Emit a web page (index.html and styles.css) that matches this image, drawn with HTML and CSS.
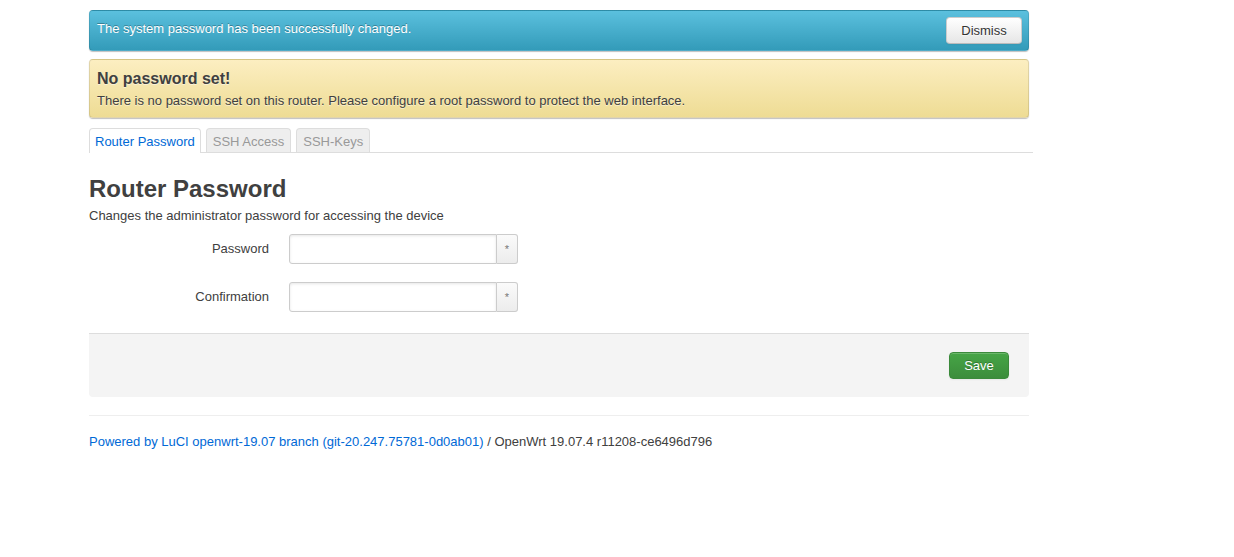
FILE: index.html
```html
<!DOCTYPE html>
<html>
<head>
<meta charset="utf-8">
<link rel="stylesheet" href="styles.css">
</head>
<body>
<div class="container">
  <div class="alert info">
    <span class="alert-text">The system password has been successfully changed.</span>
    <button class="btn">Dismiss</button>
  </div>
  <div class="alert warning">
    <h4>No password set!</h4>
    <p>There is no password set on this router. Please configure a root password to protect the web interface.</p>
  </div>
  <ul class="tabs">
    <li class="tab active">Router Password</li>
    <li class="tab">SSH Access</li>
    <li class="tab">SSH-Keys</li>
  </ul>
  <h2 class="title">Router Password</h2>
  <div class="desc">Changes the administrator password for accessing the device</div>
  <div class="form">
    <div class="row">
      <label class="label">Password</label>
      <div class="field"><input class="input" type="password"><span class="addon">*</span></div>
    </div>
    <div class="row">
      <label class="label">Confirmation</label>
      <div class="field"><input class="input" type="password"><span class="addon">*</span></div>
    </div>
  </div>
  <div class="actions">
    <button class="btn save">Save</button>
  </div>
  <hr class="rule">
  <footer class="footer"><a href="#">Powered by LuCI openwrt-19.07 branch (git-20.247.75781-0d0ab01)</a> / OpenWrt 19.07.4 r11208-ce6496d796</footer>
</div>
</body>
</html>
```
FILE: styles.css
```css
* { box-sizing: border-box; }
html, body { margin: 0; padding: 0; background: #fff; }
body {
  font-family: "Liberation Sans", Arial, sans-serif;
  font-size: 13px;
  color: #404040;
}
.container {
  width: 940px;
  margin-left: 89px;
  padding-top: 10px;
}
.alert {
  border-radius: 4px;
  border: 1px solid rgba(0,0,0,0.1);
  box-shadow: 0 1px 1px rgba(0,0,0,0.25);
}
.alert.info {
  height: 41px;
  background: linear-gradient(#5bc0de, #339bb9);
  display: flex;
  align-items: center;
  justify-content: space-between;
  padding: 0 6px 0 7px;
  color: #fff;
  text-shadow: 0 -1px 0 rgba(0,0,0,0.3);
}
.alert-text { font-size: 13px; margin-top: -5px; }
.btn {
  font-family: "Liberation Sans", Arial, sans-serif;
  font-size: 13px;
  color: #333;
  background: linear-gradient(#fff, #e6e6e6);
  border: 1px solid #ccc;
  border-bottom-color: #bbb;
  border-radius: 4px;
  box-shadow: inset 0 1px 0 rgba(255,255,255,0.2), 0 1px 2px rgba(0,0,0,0.05);
  cursor: pointer;
  text-shadow: 0 1px 1px rgba(255,255,255,0.75);
}
.alert.info .btn {
  width: 76px;
  height: 27px;
  padding: 0;
}
.alert.warning {
  margin-top: 8px;
  height: 59px;
  background: linear-gradient(#fceec1, #eedc94);
  padding: 9px 7px;
  text-shadow: 0 1px 0 rgba(255,255,255,0.5);
}
.alert.warning h4 {
  margin: 0;
  font-size: 16px;
  font-weight: bold;
  line-height: 20px;
}
.alert.warning p {
  margin: 3px 0 0;
  font-size: 13px;
  line-height: 18px;
}
.tabs {
  list-style: none;
  margin: 10px -4px 0 0;
  padding: 0;
  display: flex;
  gap: 5px;
  border-bottom: 1px solid #ddd;
  height: 25px;
}
.tab {
  height: 24px;
  line-height: 25px;
  padding: 0 6px;
  font-size: 13px;
  color: #999;
  background: #eee;
  border: 1px solid #ddd;
  border-bottom: none;
  border-radius: 4px 4px 0 0;
}
.tab.active {
  height: 25px;
  padding: 0 5px;
  background: #fff;
  color: #0069d6;
  border-color: #ddd;
}
.title {
  margin: 21px 0 0;
  font-size: 24px;
  font-weight: bold;
  line-height: 30px;
  color: #404040;
}
.desc {
  margin-top: 3px;
  line-height: 18px;
}
.form { margin-top: -1px; }
.row {
  display: flex;
  align-items: center;
  margin-top: 1px;
  height: 48px;
}
.row + .row { margin-top: 0; }
.label {
  width: 180px;
  text-align: right;
  font-size: 13px;
  color: #404040;
  margin-top: -2px;
}
.field {
  margin-left: 20px;
  display: flex;
  height: 30px;
}
.input {
  width: 208px;
  height: 30px;
  border: 1px solid #ccc;
  border-radius: 3px 0 0 3px;
  box-shadow: inset 0 1px 3px rgba(0,0,0,0.1);
  padding: 4px;
  font-size: 13px;
  outline: none;
}
.addon {
  width: 21px;
  height: 30px;
  border: 1px solid #ccc;
  border-left: none;
  border-radius: 0 3px 3px 0;
  background: linear-gradient(#fafafa, #ececec);
  color: #777;
  font-size: 11px;
  display: flex;
  align-items: center;
  justify-content: center;
}
.actions {
  margin-top: 12px;
  height: 64px;
  background: #f4f4f4;
  border-top: 1px solid #ddd;
  border-radius: 0 0 4px 4px;
  display: flex;
  align-items: center;
  justify-content: flex-end;
  padding-right: 20px;
}
.btn.save {
  width: 60px;
  height: 27px;
  padding: 0;
  color: #fff;
  background: linear-gradient(#46a546, #3c8d3c);
  border: 1px solid #3b8a3b;
  text-shadow: 0 -1px 0 rgba(0,0,0,0.25);
  margin-top: -1px;
}
.rule {
  margin: 18px 0 0;
  border: none;
  border-top: 1px solid #eee;
}
.footer {
  margin-top: 17px;
  line-height: 18px;
  font-size: 13px;
}
.footer a { color: #0069d6; text-decoration: none; }
```
